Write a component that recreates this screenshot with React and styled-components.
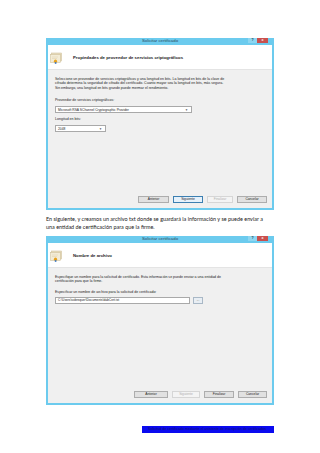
import React from "react"
import styled, { createGlobalStyle, css } from "styled-components"

const GlobalStyle = createGlobalStyle`
  html, body {
    margin: 0;
    padding: 0;
    background: #ffffff;
  }
  * {
    box-sizing: border-box;
  }
`

const Page = styled.div`
  width: 320px;
  height: 453px;
  overflow: hidden;
  background: #ffffff;
  padding: 38px 46px 0 46px;
  display: flex;
  flex-direction: column;
`

const Dialog = styled.div`
  width: 228px;
  height: ${(p) => p.$height}px;
  display: flex;
  flex-direction: column;
  border: 2px solid #6ccbee;
  border-top: none;
  background: #f0f0f0;
  font-family: "Liberation Sans", Arial, sans-serif;
  color: #1e1e1e;
`

const TitleBar = styled.div`
  height: 7px;
  margin: 0 -2px;
  background: #6ccbee;
  display: grid;
  grid-template-columns: 1fr auto 1fr;
  align-items: start;
`

const Title = styled.div`
  grid-column: 2;
  font-size: 4.3px;
  line-height: 6px;
  color: #2a4a5a;
  white-space: nowrap;
`

const Caption = styled.div`
  grid-column: 3;
  justify-self: end;
  display: flex;
  margin-right: 6px;
`

const CaptionButton = styled.div`
  height: 5px;
  width: ${(p) => (p.$close ? 11 : 9)}px;
  background: ${(p) => (p.$close ? "#c9504e" : "#8dd6f1")};
  color: ${(p) => (p.$close ? "#ffffff" : "#1d3b4d")};
  font-size: 3.6px;
  font-weight: bold;
  line-height: 5px;
  text-align: center;
`

const Header = styled.div`
  height: 25px;
  background: #ffffff;
  display: flex;
  align-items: center;
  padding-left: 2px;
  gap: 10px;
  border-bottom: 1px solid #e4e4e4;
`

const HeaderText = styled.div`
  font-size: 4.3px;
  font-weight: bold;
  color: #1a1a1a;
  white-space: nowrap;
`

const Body = styled.div`
  flex: 1;
  padding: 7px 7px 0 7px;
  display: flex;
  flex-direction: column;
`

const Description = styled.div`
  font-size: 3.55px;
  line-height: 4.4px;
  white-space: nowrap;
  color: #222;
`

const Label = styled.div`
  margin-top: ${(p) => p.$top}px;
  font-size: 3.55px;
  line-height: 4.4px;
  white-space: nowrap;
  color: #222;
`

const Select = styled.div`
  margin-top: 3.5px;
  width: ${(p) => p.$width}px;
  height: 7px;
  background: #ffffff;
  border: 1px solid #a9a9a9;
  display: flex;
  align-items: center;
  justify-content: space-between;
  padding: 0 3px 0 2px;
  font-size: 3.3px;
  white-space: nowrap;
`

const Arrow = styled.span`
  font-size: 3px;
  color: #555;
`

const FileRow = styled.div`
  margin-top: 3px;
  display: flex;
  gap: 3px;
  align-items: center;
`

const Input = styled.div`
  width: 135px;
  height: 7px;
  background: #ffffff;
  border: 1px solid #a9a9a9;
  font-size: 3.2px;
  line-height: 5px;
  padding-left: 2px;
  white-space: nowrap;
`

const BrowseButton = styled.div`
  width: 10px;
  height: 7px;
  background: #e8eef4;
  border: 1px solid #a9b8c6;
  font-size: 3px;
  line-height: 4px;
  text-align: center;
`

const Footer = styled.div`
  display: flex;
  justify-content: flex-end;
  gap: 4px;
  padding: 0 5px 5px 0;
`

const Button = styled.div`
  width: ${(p) => p.$width}px;
  height: 7px;
  font-size: 3.3px;
  line-height: 5px;
  text-align: center;
  background: #e1e1e1;
  border: 1px solid #adadad;
  color: #222;

  ${(p) =>
    p.$default &&
    css`
      background: #e5f1fb;
      border-color: #3c7fb1;
    `}

  ${(p) =>
    p.$disabled &&
    css`
      background: #f4f4f4;
      border-color: #d6d6d6;
      color: #b0b0b0;
    `}
`

const Paragraph = styled.p`
  margin: 5px 0 5px 0;
  font-family: Lato, "Liberation Sans", sans-serif;
  font-size: 5.45px;
  line-height: 8px;
  color: #1a1a1a;
  white-space: nowrap;
`

const LinkBar = styled.div`
  margin: 21px 0 0 96px;
  width: 132px;
  height: 7px;
  background: #0a0af0;
  color: #10106e;
  font-family: "Liberation Sans", Arial, sans-serif;
  font-size: 3.6px;
  line-height: 7px;
  padding-left: 6px;
  white-space: nowrap;
  overflow: hidden;
`

const CertIcon = () => (
  <svg width="13" height="13" viewBox="0 0 13 13">
    <rect x="1.5" y="2" width="10" height="8" fill="#e9dfc2" stroke="#c9b98f" strokeWidth="0.5" />
    <rect x="0.5" y="3.5" width="10" height="8" fill="#f3ecd6" stroke="#c9b98f" strokeWidth="0.5" />
    <line x1="2" y1="6" x2="8" y2="6" stroke="#d8caa3" strokeWidth="0.4" />
    <line x1="2" y1="7.5" x2="7" y2="7.5" stroke="#d8caa3" strokeWidth="0.4" />
    <circle cx="5.5" cy="10.2" r="1.6" fill="#e8a21e" />
    <rect x="4.8" y="11.2" width="1.6" height="1.6" fill="#2f6fc0" />
  </svg>
)

const DialogFrame = ({ height, heading, children, buttons }) => (
  <Dialog $height={height}>
    <TitleBar>
      <Title>Solicitar certificado</Title>
      <Caption>
        <CaptionButton>?</CaptionButton>
        <CaptionButton $close>x</CaptionButton>
      </Caption>
    </TitleBar>
    <Header>
      <CertIcon />
      <HeaderText>{heading}</HeaderText>
    </Header>
    <Body>{children}</Body>
    <Footer>
      {buttons.map((b) => (
        <Button key={b.label} $width={b.width} $default={b.isDefault} $disabled={b.disabled}>
          {b.label}
        </Button>
      ))}
    </Footer>
  </Dialog>
)

const App = () => (
  <Page>
    <GlobalStyle />
    <DialogFrame
      height={172}
      heading="Propiedades de proveedor de servicios criptográficos"
      buttons={[
        { label: "Anterior", width: 31 },
        { label: "Siguiente", width: 30, isDefault: true },
        { label: "Finalizar", width: 26, disabled: true },
        { label: "Cancelar", width: 30 },
      ]}
    >
      <Description>
        Seleccione un proveedor de servicios criptográficos y una longitud en bits. La longitud en bits de la clave de
        <br />
        cifrado determina la seguridad de cifrado del certificado. Cuanto mayor sea la longitud en bits, más segura.
        <br />
        Sin embargo, una longitud en bits grande puede mermar el rendimiento.
      </Description>
      <Label $top={8}>Proveedor de servicios criptográficos:</Label>
      <Select $width={137}>
        Microsoft RSA SChannel Cryptographic Provider
        <Arrow>▼</Arrow>
      </Select>
      <Label $top={4}>Longitud en bits:</Label>
      <Select $width={51}>
        2048
        <Arrow>▼</Arrow>
      </Select>
    </DialogFrame>

    <Paragraph>
      En siguiente, y creamos un archivo txt donde se guardará la información y se puede enviar a
      <br />
      una entidad de certificación para que la firme.
    </Paragraph>

    <DialogFrame
      height={169}
      heading="Nombre de archivo"
      buttons={[
        { label: "Anterior", width: 34 },
        { label: "Siguiente", width: 28, disabled: true },
        { label: "Finalizar", width: 30 },
        { label: "Cancelar", width: 29 },
      ]}
    >
      <Description>
        Especifique un nombre para la solicitud de certificado. Esta información se puede enviar a una entidad de
        <br />
        certificación para que la firme.
      </Description>
      <Label $top={6}>Especificar un nombre de archivo para la solicitud de certificado:</Label>
      <FileRow>
        <Input>C:\Users\sobrequer\Documents\dabCert.txt</Input>
        <BrowseButton>...</BrowseButton>
      </FileRow>
    </DialogFrame>

    <LinkBar>Solicitud de certificado mediante el asistente de inscripción de certificados</LinkBar>
  </Page>
)

export default App
